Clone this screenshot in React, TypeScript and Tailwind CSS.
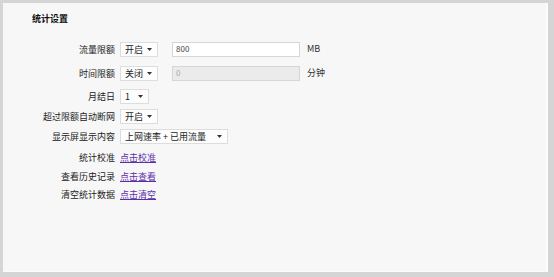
import React from 'react';

const font = { fontFamily: '"Noto Sans CJK SC", "Liberation Sans", sans-serif' };

function Select({ value, width }: { value: string; width: string }) {
  return (
    <div
      className={`${width} h-[15px] flex items-center justify-between border border-[#dddddd] bg-[#fdfdfd] pl-[4px] pr-[5px] text-[9px] leading-none text-[#222]`}
    >
      <span>{value}</span>
      <svg width="5" height="3" viewBox="0 0 5 3">
        <path d="M0 0 L5 0 L2.5 3 Z" fill="#333" />
      </svg>
    </div>
  );
}

function Input({ value, disabled, unit }: { value: string; disabled?: boolean; unit: string }) {
  return (
    <>
      <div
        className={`ml-[14px] w-[128px] h-[15px] flex items-center border border-[#d6d6d6] pl-[3px] text-[8px] leading-none ${
          disabled ? 'bg-[#ebebeb] text-[#aaa]' : 'bg-white text-[#444]'
        }`}
      >
        {value}
      </div>
      <span className="ml-[7px] text-[9px] text-[#333]">{unit}</span>
    </>
  );
}

function Row({ label, h, children }: { label: string; h: string; children: React.ReactNode }) {
  return (
    <div className={`flex items-center ${h}`}>
      <div className="w-[117px] pr-[5px] text-right text-[9px] leading-none text-[#222]">{label}</div>
      {children}
    </div>
  );
}

function Link({ text }: { text: string }) {
  return <a className="text-[9px] leading-none text-[#5b2fa8] underline underline-offset-1 cursor-pointer">{text}</a>;
}

export default function App() {
  return (
    <div className="w-[554px] h-[277px] bg-[#d5d5d5] pl-[3px] pt-[3px] pr-[6px] pb-[5px]" style={font}>
      <div className="h-full bg-[#f7f7f7] border-r-2 border-b border-[#fcfcfc]">
        <div className="pt-[8px] pl-[29px] text-[9px] leading-[16px] font-bold text-[#111]">统计设置</div>
        <div className="mt-[10px] flex flex-col">
          <Row label="流量限额" h="h-[24px]">
            <Select value="开启" width="w-[38px]" />
            <Input value="800" unit="MB" />
          </Row>
          <Row label="时间限额" h="h-[24px]">
            <Select value="关闭" width="w-[38px]" />
            <Input value="0" disabled unit="分钟" />
          </Row>
          <Row label="月结日" h="h-[22px]">
            <Select value="1" width="w-[29px]" />
          </Row>
          <Row label="超过限额自动断网" h="h-[19px]">
            <Select value="开启" width="w-[38px]" />
          </Row>
          <Row label="显示屏显示内容" h="h-[21px]">
            <Select value="上网速率 + 已用流量" width="w-[108px]" />
          </Row>
          <Row label="统计校准" h="h-[20px]">
            <Link text="点击校准" />
          </Row>
          <Row label="查看历史记录" h="h-[19px]">
            <Link text="点击查看" />
          </Row>
          <Row label="清空统计数据" h="h-[17px]">
            <Link text="点击清空" />
          </Row>
        </div>
      </div>
    </div>
  );
}
